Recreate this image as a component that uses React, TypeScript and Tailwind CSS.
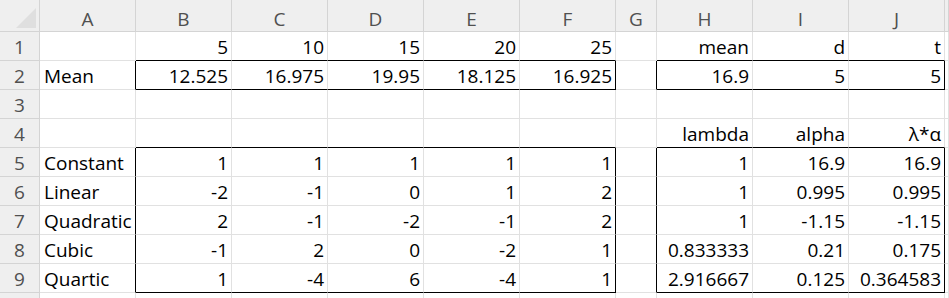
import clsx from "clsx";

type Cell = string | number | null;

const COLS = ["A", "B", "C", "D", "E", "F", "G", "H", "I", "J", ""];

const rows: Cell[][] = [
  [null, 5, 10, 15, 20, 25, null, "mean", "d", "t"],
  ["Mean", 12.525, 16.975, 19.95, 18.125, 16.925, null, 16.9, 5, 5],
  [],
  [null, null, null, null, null, null, null, "lambda", "alpha", "λ*α"],
  ["Constant", 1, 1, 1, 1, 1, null, 1, 16.9, 16.9],
  ["Linear", -2, -1, 0, 1, 2, null, 1, 0.995, 0.995],
  ["Quadratic", 2, -1, -2, -1, 2, null, 1, -1.15, -1.15],
  ["Cubic", -1, 2, 0, -2, 1, null, 0.833333, 0.21, 0.175],
  ["Quartic", 1, -4, 6, -4, 1, null, 2.916667, 0.125, 0.364583],
  [],
];

// outlined ranges, 1-based rows, 0-based columns (A = 0)
const boxes = [
  { r1: 2, r2: 2, c1: 1, c2: 5 },
  { r1: 2, r2: 2, c1: 7, c2: 9 },
  { r1: 5, r2: 9, c1: 1, c2: 5 },
  { r1: 5, r2: 9, c1: 7, c2: 9 },
];

function edges(r: number, c: number) {
  let right = false;
  let bottom = false;
  for (const b of boxes) {
    const inRows = r >= b.r1 && r <= b.r2;
    const inCols = c >= b.c1 && c <= b.c2;
    if (inRows && (c === b.c2 || c === b.c1 - 1)) right = true;
    if (inCols && (r === b.r2 || r === b.r1 - 1)) bottom = true;
  }
  return { right, bottom };
}

export default function App() {
  return (
    <div
      className="h-[298px] w-[949px] overflow-hidden bg-white"
      style={{ fontFamily: "'Open Sans', 'Liberation Sans', sans-serif" }}
    >
      <div className="grid grid-cols-[40px_repeat(6,96px)_41px_repeat(3,96px)_1fr] grid-rows-[32px_repeat(10,29px)] text-[19px] leading-none">
        {/* select-all corner */}
        <div className="relative border-r border-b border-[#d4d4d4] bg-[#efefef]">
          <svg className="absolute right-[3px] bottom-[3px]" width="20" height="20" viewBox="0 0 20 20">
            <polygon points="20,0 20,20 0,20" fill="#dfdfdf" />
          </svg>
        </div>
        {COLS.map((col, i) => (
          <div
            key={i}
            className="flex items-end justify-center border-r border-b border-[#d4d4d4] bg-[#efefef] pb-[2px] text-[#505050]"
          >
            {col}
          </div>
        ))}

        {rows.map((row, ri) => {
          const r = ri + 1;
          return [
            <div
              key={`h${r}`}
              className="flex items-end justify-center border-r border-b border-[#d4d4d4] bg-[#efefef] pb-[3px] text-[#505050]"
            >
              {r < 10 ? r : null}
            </div>,
            ...COLS.map((_, c) => {
              const v = row[c] ?? null;
              const { right, bottom } = edges(r, c);
              const isText = typeof v === "string" && c === 0;
              return (
                <div
                  key={`${r}-${c}`}
                  className={clsx(
                    "flex items-end whitespace-nowrap border-r border-b pb-[3px] text-black",
                    isText ? "justify-start pl-[4px]" : "justify-end pr-[3px]",
                    right ? "border-r-black" : "border-r-[#e1e1e1]",
                    bottom ? "border-b-black" : "border-b-[#e1e1e1]",
                  )}
                >
                  {v}
                </div>
              );
            }),
          ];
        })}
      </div>
    </div>
  );
}
